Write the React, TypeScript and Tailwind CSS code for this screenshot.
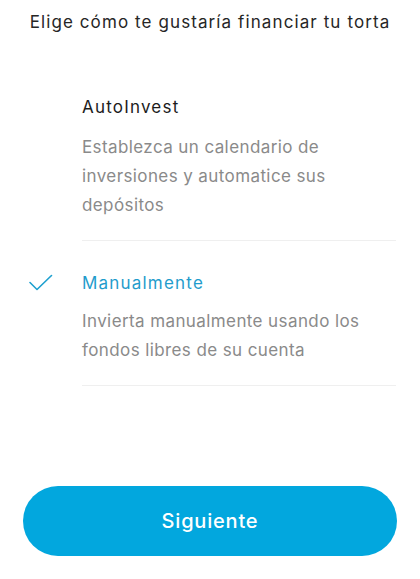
import React from "react";

export default function App() {
  return (
    <div className="w-[420px] h-[579px] bg-white flex flex-col" style={{ fontFamily: "Inter, 'Noto Sans', sans-serif" }}>
      <div className="h-[45px] flex items-center justify-center text-[17px] tracking-[1.1px] text-[#262626] pt-[1px]">
        Elige cómo te gustaría financiar tu torta
      </div>
      <div className="flex flex-col mt-[45px]">
        <div className="flex">
          <div className="w-[82px] shrink-0" />
          <div className="flex-1 mr-[24px] border-b border-[#efefef] pb-[20px]">
            <div className="text-[17px] tracking-[1.2px] text-[#1c1c1c] leading-[34px]">AutoInvest</div>
            <div className="text-[17px] tracking-[0.4px] text-[#8a8a8a] leading-[29px] mt-[8.5px]">
              Establezca un calendario de inversiones y automatice sus depósitos
            </div>
          </div>
        </div>
        <div className="flex mt-[25px]">
          <div className="w-[82px] shrink-0 flex items-start">
            <svg width="24" height="18" viewBox="0 0 24 18" className="ml-[29px] mt-[8px]" fill="none">
              <path d="M1 8.5 L8 15.5 L22.5 1.5" stroke="#1ea0cf" strokeWidth="1.6" strokeLinecap="round" strokeLinejoin="round" />
            </svg>
          </div>
          <div className="flex-1 mr-[24px] border-b border-[#efefef] pb-[20px]">
            <div className="text-[17px] tracking-[1.2px] text-[#1f9ccc] leading-[34px]">Manualmente</div>
            <div className="text-[17px] tracking-[0.4px] text-[#8a8a8a] leading-[29px] mt-[7.5px]">
              Invierta manualmente usando los fondos libres de su cuenta
            </div>
          </div>
        </div>
      </div>
      <div className="flex-1" />
      <div className="px-[23px] pb-[23px]">
        <button className="w-full h-[70px] rounded-full bg-[#02a7de] text-white text-[20px] tracking-[0.8px] font-medium flex items-center justify-center">
          Siguiente
        </button>
      </div>
    </div>
  );
}
